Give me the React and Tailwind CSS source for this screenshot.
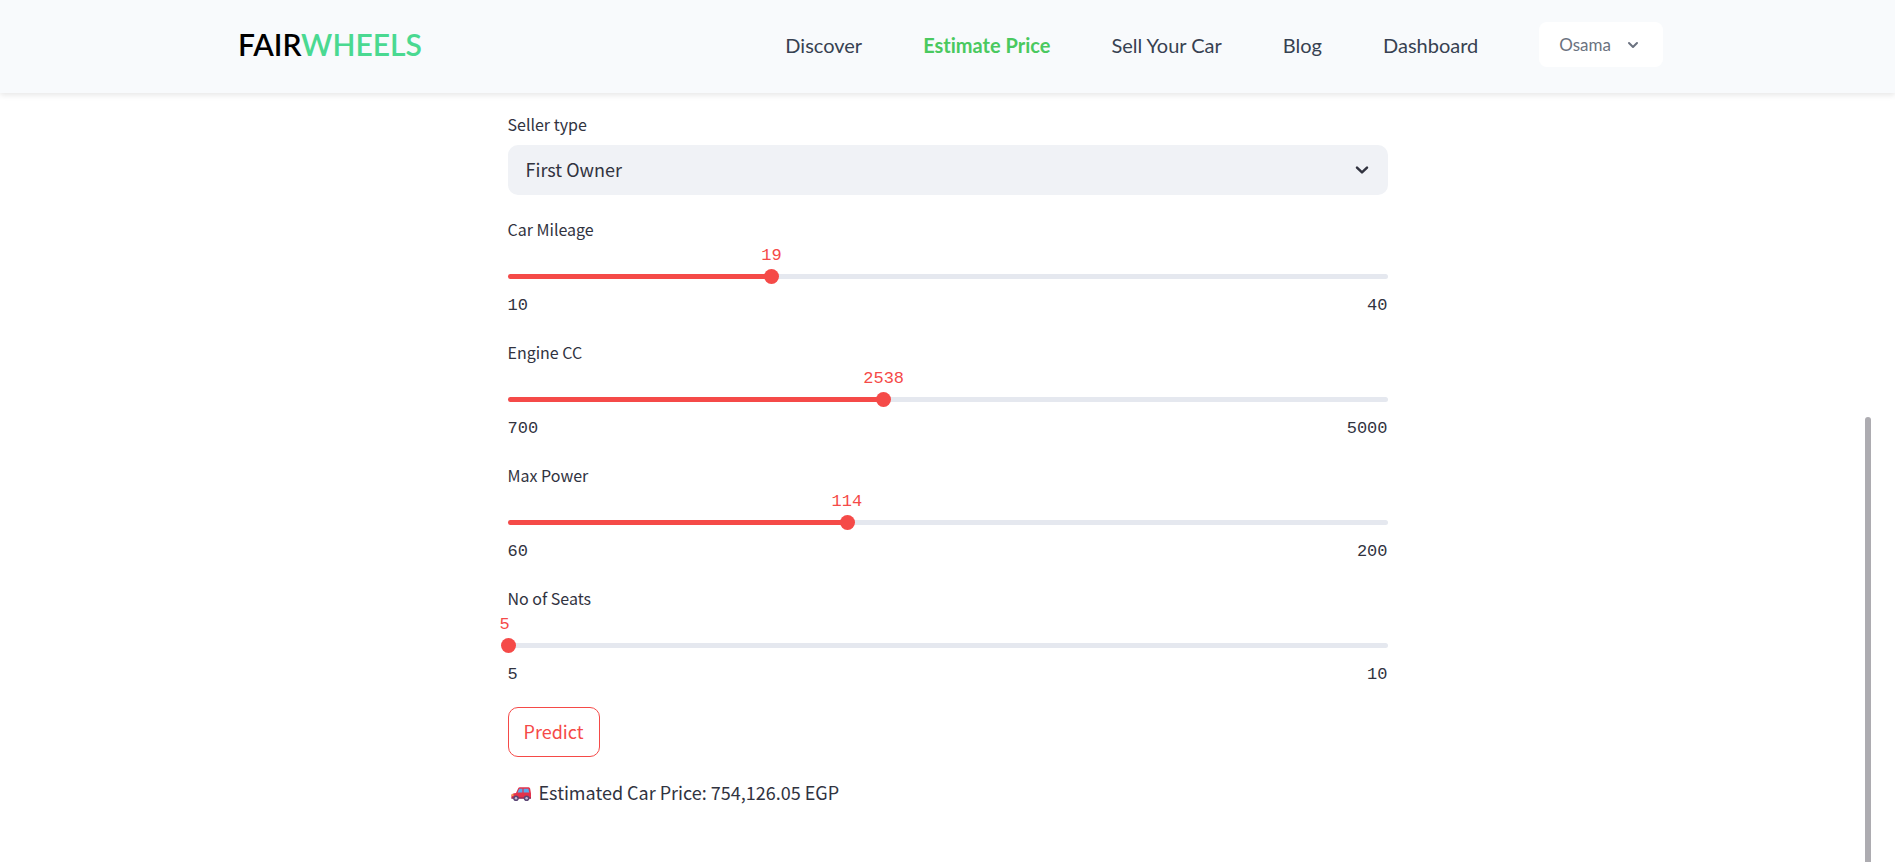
import { useState } from 'react';

const links = ['Discover', 'Estimate Price', 'Sell Your Car', 'Blog', 'Dashboard'];

const sliders = [
  { id: 'mileage', label: 'Car Mileage', min: 10, max: 40, initial: 19 },
  { id: 'engine', label: 'Engine CC', min: 700, max: 5000, initial: 2538 },
  { id: 'power', label: 'Max Power', min: 60, max: 200, initial: 114 },
  { id: 'seats', label: 'No of Seats', min: 5, max: 10, initial: 5 },
];

function Header() {
  return (
    <header className="relative z-10 bg-[#f8fafc] font-['Lato',sans-serif] shadow-[0_2px_6px_rgba(0,0,0,0.1)] [font-variant-ligatures:none]">
      <div className="mx-auto flex h-[93px] max-w-[1431px] items-center justify-between pb-1 pl-1.5">
        <a href="#home" className="pb-0.5 text-[30px] leading-10 font-semibold text-black">
          FAIR<span className="text-[#4ad991]">WHEELS</span>
        </a>
        <nav className="flex items-center gap-[61px]">
          {links.map((name) => (
            <a
              key={name}
              href="#nav"
              className={
                name === 'Estimate Price'
                  ? 'text-xl font-bold text-[#4ac95f]'
                  : 'text-xl text-[#374151]'
              }
            >
              {name}
            </a>
          ))}
          <button
            type="button"
            className="flex h-[45px] items-center gap-3 rounded-lg bg-white px-5 text-[17px] text-[#6b7280]"
          >
            Osama
            <svg className="size-5" viewBox="0 0 20 20" fill="currentColor" aria-hidden="true">
              <path
                fillRule="evenodd"
                clipRule="evenodd"
                d="M5.293 7.293a1 1 0 011.414 0L10 10.586l3.293-3.293a1 1 0 111.414 1.414l-4 4a1 1 0 01-1.414 0l-4-4a1 1 0 010-1.414z"
              />
            </svg>
          </button>
        </nav>
      </div>
    </header>
  );
}

function Slider({ id, label, min, max, initial }) {
  const [value, setValue] = useState(initial);
  const percent = ((value - min) / (max - min)) * 100;
  return (
    <div>
      <label htmlFor={id} className="block text-base leading-6">
        {label}
      </label>
      <div className="relative mt-[33px] h-[5px] rounded-full bg-[#e5e8ef]">
        <div className="h-full rounded-full bg-[#f54a48]" style={{ width: `${percent}%` }} />
        <output
          htmlFor={id}
          className={`absolute bottom-[11px] font-['Liberation_Mono',monospace] text-[17px] leading-6 text-[#f54a48] ${
            value === min ? '-translate-x-2' : '-translate-x-1/2'
          }`}
          style={{ left: `${percent}%` }}
        >
          {value}
        </output>
        <input
          id={id}
          type="range"
          min={min}
          max={max}
          value={value}
          onChange={(e) => setValue(Number(e.target.value))}
          className="absolute -top-[5px] -left-[7px] m-0 h-[15px] w-[calc(100%+14px)] cursor-pointer appearance-none bg-transparent [&::-webkit-slider-thumb]:size-[15px] [&::-webkit-slider-thumb]:appearance-none [&::-webkit-slider-thumb]:rounded-full [&::-webkit-slider-thumb]:bg-[#f54a48]"
        />
      </div>
      <div className="mt-[15px] flex justify-between font-['Liberation_Mono',monospace] text-[17px] leading-6">
        <span>{min}</span>
        <span>{max}</span>
      </div>
    </div>
  );
}

function CarIcon() {
  return (
    <svg className="mt-1 h-4 w-5" viewBox="0 0 20 16" aria-hidden="true">
      <path d="M5 7 7.2 2.2Q7.6 1.2 9 1.2H17.6Q19 1.2 19.2 2.8L20 7.5V12H1Q.4 12 .4 11V8.8Q.8 7.4 5 7Z" fill="#e3324b" />
      <path d="M6.5 6.6 8.2 2.8H11.4V6.6ZM12.6 2.8H17.4L18.2 6.6H12.6Z" fill="#58a9ee" />
      <path d="M.4 11.4H20V12.8H.4Z" fill="#8a2a58" />
      <rect x=".6" y="8.2" width="2" height="1.6" rx=".6" fill="#f8c24c" />
      <circle cx="5" cy="12.2" r="2.8" fill="#5b4675" />
      <circle cx="15.6" cy="12.2" r="2.8" fill="#5b4675" />
      <circle cx="5" cy="12.2" r="1.2" fill="#c9bdd6" />
      <circle cx="15.6" cy="12.2" r="1.2" fill="#c9bdd6" />
    </svg>
  );
}

export default function App() {
  return (
    <div className="relative min-h-screen overflow-hidden bg-white font-['Noto_Sans_CJK_JP',sans-serif] text-[#31333f]">
      <Header />
      <main className="mx-auto max-w-[880px] pt-[19px]">
        <label htmlFor="seller" className="block text-base leading-6">
          Seller type
        </label>
        <div className="relative mt-[9px]">
          <select
            id="seller"
            defaultValue="First Owner"
            className="block h-[50px] w-full appearance-none rounded-[10px] bg-[#f0f2f6] pr-12 pb-0.5 pl-[18px] text-lg"
          >
            <option>First Owner</option>
            <option>Second Owner</option>
            <option>Third Owner</option>
          </select>
          <svg
            className="pointer-events-none absolute top-[15px] right-4 size-5"
            viewBox="0 0 20 20"
            fill="none"
            stroke="currentColor"
            strokeWidth="2.5"
            strokeLinecap="round"
            strokeLinejoin="round"
            aria-hidden="true"
          >
            <path d="m5 7.6 5 4.8 5-4.8" />
          </svg>
        </div>
        <div className="mt-[22px] flex flex-col gap-[22px]">
          {sliders.map((s) => (
            <Slider key={s.id} {...s} />
          ))}
        </div>
        <button
          type="button"
          className="mt-5 block h-[50px] rounded-[10px] border border-[#f54a48] bg-white px-[15px] pb-0.5 text-lg text-[#f54a48]"
        >
          Predict
        </button>
        <p className="mt-[21px] flex items-center gap-2 pl-[3px] text-lg leading-7">
          <CarIcon />
          Estimated Car Price: 754,126.05 EGP
        </p>
      </main>
      <div className="absolute top-[417px] right-6 bottom-0 w-1.5 rounded-t-full bg-[#adacb1]" />
    </div>
  );
}
